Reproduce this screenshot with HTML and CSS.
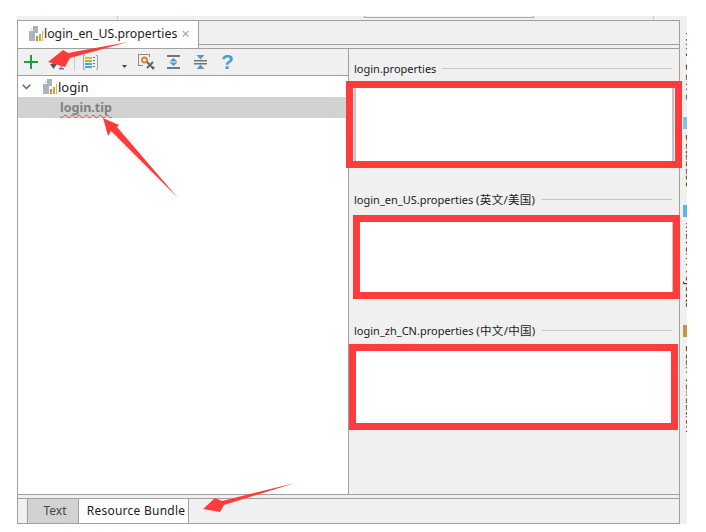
FILE: index.html
```html
<!DOCTYPE html>
<html lang="en">
<head>
<meta charset="utf-8">
<title>login_en_US.properties</title>
<link rel="stylesheet" href="styles.css">
</head>
<body>
<svg width="0" height="0" class="defs">
  <symbol id="bundle" viewBox="0 0 14 15">
    <path d="M0 5 4 5 4 0 9 0 9 7 6 7 6 15 0 15Z" fill="#a9b4bb"/>
    <path d="M1 4 3.500 1 3.500 4Z" fill="#d5dade"/>
    <rect x="7" y="10" width="2" height="5" fill="#f0802c"/>
    <rect x="10" y="8" width="2" height="7" fill="#8cc152"/>
    <rect x="13" y="5" width="1" height="10" fill="#f0b030"/>
  </symbol>
</svg>
<div class="app">
  <div class="strip-top"><span class="tick tick-a"></span><span class="bracket"></span><span class="tick tick-b"></span></div>
  <div class="body-row">
    <main class="window">
      <div class="tabbar">
        <div class="file-tab">
          <svg class="file-icon"><use href="#bundle"/></svg>
          <span class="file-name">login_en_US.properties</span>
          <span class="close">×</span>
        </div>
        <div class="tabbar-fill"></div>
      </div>
      <div class="split">
        <section class="left">
          <div class="toolbar">
            <svg class="tool tool-plus" width="14" height="14" viewBox="0 0 14 14"><path d="M6 0h2v6h6v2H8v6H6V8H0V6h6Z" fill="#249a41"/></svg>
            <svg class="tool tool-sort" width="15" height="14" viewBox="0 0 15 14"><path d="M0 8h7L3.500 13Z" fill="#555"/><path d="M2.500 4h2v5h-2Z" fill="#555"/><path d="M9 8h5v1l-3 3h3v1.500H9v-1l3-3H9Z" fill="#8a5fb0"/></svg>
            <span class="sep"></span>
            <svg class="tool tool-grid" width="15" height="15" viewBox="0 0 15 15"><path d="M2 .5H.5v14H2M13 .5h1.500v14H13" fill="none" stroke="#9aa7b0"/><rect x="2" y="2" width="7" height="2" fill="#f0b030"/><rect x="2" y="5" width="7" height="2" fill="#8cc152"/><rect x="2" y="8" width="7" height="2" fill="#4aa3d8"/><rect x="2" y="11" width="7" height="2" fill="#4aa3d8"/><path d="M10 2h2v1h-2ZM10 5h2v1h-2ZM10 8h2v1h-2ZM10 11h2v1h-2Z" fill="#777"/></svg>
            <svg class="tool tool-drop" width="5" height="3" viewBox="0 0 5 3"><path d="M0 0h5L2.500 3Z" fill="#444"/></svg>
            <svg class="tool tool-gear" width="17" height="16" viewBox="0 0 17 16"><path d="M0 0h12v3h-1V1H1v10h4v1H0Z" fill="#8c8c8c"/><circle cx="6.500" cy="6" r="2.500" fill="none" stroke="#d08a3c" stroke-width="2"/><path d="M9 8l6 6M15 8l-6 6" stroke="#666" stroke-width="2"/><path d="M13 13h4l-2 3Z" fill="#555"/></svg>
            <svg class="tool tool-expand" width="13" height="14" viewBox="0 0 13 14"><path d="M0 0h13v2H0ZM0 12h13v2H0Z" fill="#757575"/><path d="M6.500 3l4 3.500h-8ZM6.500 11l4-3.500h-8Z" fill="#4a9ed0"/></svg>
            <svg class="tool tool-collapse" width="13" height="14" viewBox="0 0 13 14"><path d="M0 5h13v1.500H0ZM0 8h13v1.500H0Z" fill="#757575"/><path d="M6.500 4.500 2.500 0h8ZM6.500 9.500l4 4.500h-8Z" fill="#4a9ed0"/></svg>
            <span class="help">?</span>
          </div>
          <div class="tree">
            <div class="tree-row">
              <svg class="chevron" width="9" height="6" viewBox="0 0 9 6"><path d="M.7.700 4.500 4.500 8.300.7" fill="none" stroke="#6e6e6e" stroke-width="1.600"/></svg>
              <svg class="tree-icon"><use href="#bundle"/></svg>
              <span>login</span>
            </div>
            <div class="tree-row selected"><span class="key">login.tip</span></div>
          </div>
        </section>
        <section class="right">
          <div class="group">
            <div class="group-head"><span>login.properties</span><span class="rule"></span></div>
            <div class="editor"></div>
          </div>
          <div class="group">
            <div class="group-head"><span>login_en_US.properties <span class="cjk">(英文/美国)</span></span><span class="rule"></span></div>
            <div class="editor"></div>
          </div>
          <div class="group">
            <div class="group-head"><span>login_zh_CN.properties <span class="cjk">(中文/中国)</span></span><span class="rule"></span></div>
            <div class="editor"></div>
          </div>
        </section>
      </div>
      <div class="gap-bar"></div>
      <div class="bottom-tabs">
        <div class="btab btab-text">Text</div>
        <div class="btab btab-active">Resource Bundle</div>
      </div>
    </main>
    <aside class="side">
      <span class="side-label side-ant">Ant Build</span>
      <i class="side-icon side-icon-db"></i>
      <span class="side-label side-db">Database</span>
      <i class="side-icon side-icon-mvn"></i>
      <span class="side-label side-mvn">Maven Projects</span>
      <i class="side-icon side-icon-bean"></i>
      <span class="side-label side-bean">Bean Validation</span>
    </aside>
  </div>
</div>
<div class="mark mark-1"></div>
<div class="mark mark-2"></div>
<div class="mark mark-3"></div>
<svg class="arrows" width="706" height="532" viewBox="0 0 706 532">
  <path d="M128 42 68 53 63 50 48 62 65 67 70 58Z" fill="#ff3b3b"/>
  <path d="M178 198 117 127 119 125 103 118 108 136 111 131Z" fill="#ff3b3b"/>
  <path d="M295 483 222 501 215 498 203 509 220 512 224 505Z" fill="#ff3b3b"/>
</svg>
</body>
</html>
```

FILE: styles.css
```css
* { box-sizing: border-box; }
html, body { margin: 0; padding: 0; background: #fff; }
body {
  position: relative;
  width: 706px;
  height: 532px;
  overflow: hidden;
  font-family: "Noto Sans", "Noto Sans CJK SC", sans-serif;
  color: #1c1c1c;
}
.defs { position: absolute; }

.app {
  margin: 16px 0 0 17px;
  width: 670px;
  height: 508px;
  background: #f0f0f0;
  display: flex;
  flex-direction: column;
}
.strip-top { height: 4px; display: flex; align-items: flex-start; flex: none; }
.tick { width: 1px; height: 3px; background: #c4c4c4; margin-top: 0; }
.tick-a { margin-left: 100px; }
.bracket {
  width: 170px;
  height: 2px;
  margin-left: 246px;
  border: 1px solid #a8a8a8;
  border-top: 0;
}
.tick-b { margin-left: 119px; }

.body-row { display: flex; flex: 1; min-height: 0; }
.window {
  width: 663px;
  border: 1px solid #a0a0a0;
  display: flex;
  flex-direction: column;
}

.tabbar { height: 28px; flex: none; display: flex; border-bottom: 1px solid #a0a0a0; }
.file-tab {
  width: 181px;
  height: 27px;
  background: #fff;
  border-right: 1px solid #a0a0a0;
  display: flex;
  align-items: center;
  font-size: 12.3px;
  padding: 0 0 2px 11px;
}
.file-icon { width: 14px; height: 15px; flex: none; margin-right: 1px; }
.close { color: #a8a8a8; font-size: 15px; margin-left: 4px; line-height: 1; }
.tabbar-fill { flex: 1; height: 24px; border-bottom: 1px solid #a0a0a0; }

.split { flex: 1; display: flex; min-height: 0; }
.left {
  width: 331px;
  flex: none;
  border-right: 1px solid #a0a0a0;
  display: flex;
  flex-direction: column;
}
.toolbar {
  height: 27px;
  flex: none;
  border-bottom: 1px solid #a0a0a0;
  display: flex;
  align-items: center;
}
.tool { flex: none; display: block; }
.tool-plus { margin-left: 6px; }
.tool-sort { margin-left: 12px; margin-top: 2px; }
.sep { width: 1px; height: 18px; background: #c8c8c8; margin-left: 9px; }
.tool-grid { margin-left: 8px; }
.tool-drop { margin-left: 24px; margin-top: 9px; }
.tool-gear { margin-left: 11px; }
.tool-expand { margin-left: 12px; }
.tool-collapse { margin-left: 14px; }
.help {
  margin-left: 14px;
  font: bold 21px/20px "Liberation Sans", sans-serif;
  color: #4a9ed0;
}

.tree { flex: 1; background: #fff; }
.tree-row { height: 21px; display: flex; align-items: center; font-size: 13px; }
.chevron { margin-left: 4px; flex: none; }
.tree-icon { width: 14px; height: 15px; margin-left: 12px; margin-right: 1px; flex: none; }
.selected { background: #d2d2d2; padding-left: 42px; }
.key {
  font-size: 12.5px;
  font-weight: 700;
  color: #808080;
  text-decoration: underline wavy #f04040 1px;
  text-decoration-skip-ink: none;
  text-underline-offset: 2px;
}

.right {
  flex: 1;
  padding: 10px 5px 0 5px;
  display: flex;
  flex-direction: column;
  gap: 26px;
}
.group-head {
  height: 18px;
  display: flex;
  align-items: center;
  gap: 6px;
  font-size: 11px;
  white-space: nowrap;
}
.cjk { font-size: 11.5px; letter-spacing: .3px; }
.rule { flex: 1; height: 1px; background: #c8c8c8; margin-right: 2px; }
.editor {
  height: 80px;
  margin-top: 7px;
  background: #fff;
  border: 2px solid #c4c4c4;
}

.gap-bar { height: 4px; flex: none; border-top: 1px solid #a0a0a0; }
.bottom-tabs {
  height: 25px;
  flex: none;
  border-top: 1px solid #a0a0a0;
  display: flex;
  padding-left: 9px;
  font-size: 12px;
}
.btab { display: flex; align-items: center; justify-content: center; padding-bottom: 1px; }
.btab-text {
  width: 52px;
  padding-left: 4px;
  background: #d2d2d2;
  color: #444;
  border-left: 1px solid #a0a0a0;
  border-right: 1px solid #a0a0a0;
}
.btab-active {
  width: 110px;
  padding-left: 5px;
  background: #fff;
  border-right: 1px solid #a0a0a0;
  letter-spacing: .25px;
}

.side {
  flex: 1;
  overflow: hidden;
  display: flex;
  flex-direction: column;
  padding: 13px 0 0 4px;
}
.side-label {
  writing-mode: vertical-rl;
  font-size: 12px;
  line-height: 12px;
  white-space: nowrap;
  width: 12px;
  flex: none;
}
.side-ant { letter-spacing: 2px; }
.side-icon { display: block; width: 4px; height: 12px; flex: none; margin-left: -1px; }
.side-icon-db { background: #7cc4e8; margin-top: 15px; }
.side-icon-mvn { background: #5ab6e4; margin-top: 17px; }
.side-icon-bean { background: #c89048; margin-top: 18px; }
.side-db, .side-mvn { margin-top: 5px; }
.side-bean { margin-top: 8px; }

.mark { position: absolute; border: 7px solid #ff3b3b; }
.mark-1 { left: 346px; top: 81px; width: 336px; height: 87px; }
.mark-2 { left: 353px; top: 215px; width: 327px; height: 84px; }
.mark-3 { left: 349px; top: 344px; width: 329px; height: 86px; }
.arrows { position: absolute; left: 0; top: 0; pointer-events: none; }
```
